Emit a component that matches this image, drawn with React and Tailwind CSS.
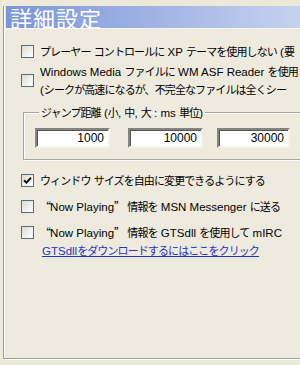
import React from "react";

const cjk = "font-['Noto_Sans_CJK_JP',sans-serif]";
const latin = "font-['Liberation_Sans','Noto_Sans_CJK_JP',sans-serif]";

// Japanese runs (and the curly quotes, full-width in a JP face) in the CJK font,
// everything else in a Latin face
function T({ children }) {
  const parts = children.split(/([\u201c\u201d\u3000-\u30ff\u4e00-\u9fff\uff00-\uffef]+)/);
  return parts.map((p, i) =>
    i % 2 ? (
      <span key={i} lang="ja" className={`${cjk} text-[11px] tracking-[-0.9px] [font-feature-settings:'fwid']`}>{p}</span>
    ) : (
      <span key={i} className={`${latin} text-[11.5px]`}>{p}</span>
    )
  );
}

function Check({ checked }) {
  return (
    <span className="flex-shrink-0 w-[13px] h-[13px] border border-[#5b6b7e] bg-gradient-to-br from-[#dcdcd5] to-white flex items-center justify-center">
      {checked && (
        <svg width="9" height="9" viewBox="0 0 9 9">
          <path d="M1 4.2 L3.4 6.6 L8 1.8" stroke="#111" strokeWidth="2" fill="none" />
        </svg>
      )}
    </span>
  );
}

function Row({ checked, children, className = "" }) {
  return (
    <div className={`flex items-center gap-[6px] pl-[17px] whitespace-nowrap ${className}`}>
      <Check checked={checked} />
      <div className="leading-[16px]">{children}</div>
    </div>
  );
}

const jumps = [
  { v: "1000", cls: "w-[75px] mr-[18px]" },
  { v: "10000", cls: "w-[75px] mr-[14px]" },
  { v: "30000", cls: "w-[73px]" },
];

export default function App() {
  return (
    <div lang="ja" className="w-[300px] h-[365px] overflow-hidden bg-[#ECE9D8] text-black">
      <div className="pl-[3px] pt-[6px]">
        <div className="w-[320px] h-[353px] border-l border-b border-[#9c9c96] shadow-[1px_1px_0_#fff,inset_1px_0_0_#fff] bg-[#EEEBDE]">
          <div className={`h-[22px] ml-[2px] bg-gradient-to-r from-[#7b95d9] to-[#ccd6ef] text-white text-[22px] leading-[22px] pl-[4px] tracking-[1px] ${cjk}`}>
            詳細設定
          </div>
          <div className="h-[1px] bg-[#f7f6ef]" />

          <Row className="mt-[10px] h-[24px]"><T>プレーヤー コントロールに XP テーマを使用しない (要</T></Row>
          <Row className="mt-[1px] h-[32px]">
            <div><T>Windows Media ファイルに WM ASF Reader を使用</T></div>
            <div><T>(シークが高速になるが、不完全なファイルは全くシー</T></div>
          </Row>

          <fieldset className="mt-[8px] ml-[19px] h-[56px] border border-[#a9a79c] shadow-[inset_1px_1px_0_#fff,1px_1px_0_#fff] pl-[11px] pt-[8px]">
            <legend className="ml-[4px] px-[2px] leading-[14px]"><T>ジャンプ距離 (小, 中, 大 : ms 単位)</T></legend>
            <div className="flex">
              {jumps.map((j) => (
                <div
                  key={j.v}
                  className={`${j.cls} h-[20px] border-2 border-t-[#85847e] border-l-[#85847e] border-b-[#f4f3ee] border-r-[#f4f3ee] shadow-[inset_1px_1px_0_#55544f] bg-white text-right pr-[4px] leading-[16px] text-[12px] font-['Liberation_Sans',sans-serif]`}
                >
                  {j.v}
                </div>
              ))}
            </div>
          </fieldset>

          <Row checked className="mt-[12px] h-[16px]"><T>ウィンドウ サイズを自由に変更できるようにする</T></Row>
          <Row className="mt-[10px] h-[16px]"><T>“Now Playing” 情報を MSN Messenger に送る</T></Row>
          <Row className="mt-[10px] h-[16px]"><T>“Now Playing” 情報を GTSdll を使用して mIRC</T></Row>
          <div className="pl-[38px] mt-[1px] text-[#1f35c0] underline decoration-[#1f35c0] leading-[16px]">
            <T>GTSdllをダウンロードするにはここをクリック</T>
          </div>
        </div>
      </div>
    </div>
  );
}
